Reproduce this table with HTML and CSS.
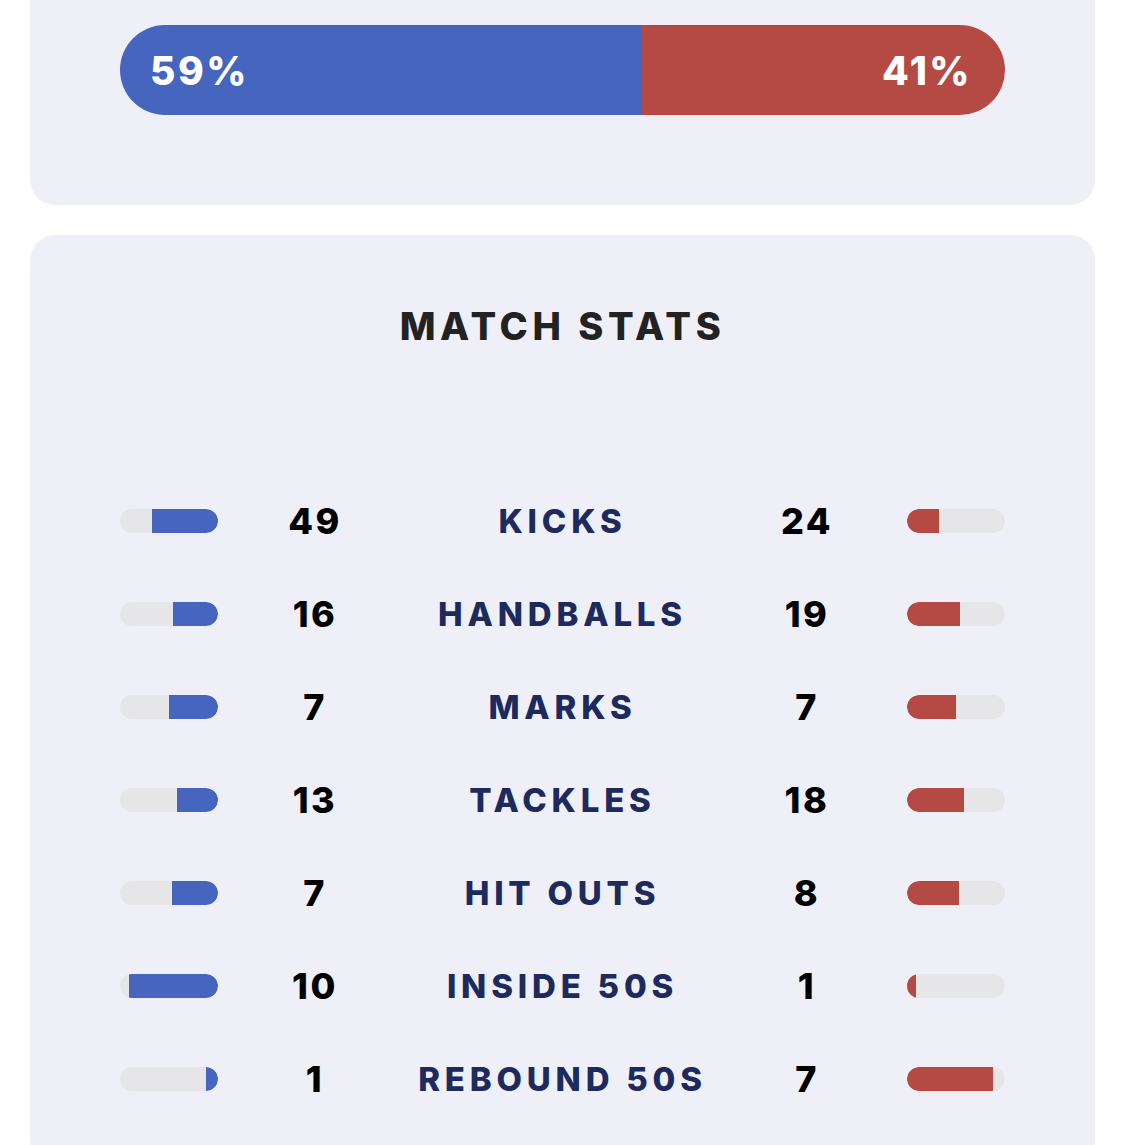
FILE: index.html
```html
<!DOCTYPE html>
<html lang="en">
<head>
<meta charset="utf-8">
<title>Match Stats</title>
<link rel="stylesheet" href="styles.css">
</head>
<body>
<main class="page">
  <section class="card card-possession">
    <div class="split-bar">
      <div class="split home" style="flex-basis:59%"><span>59%</span></div>
      <div class="split away" style="flex-basis:41%"><span>41%</span></div>
    </div>
  </section>

  <section class="card card-stats">
    <h2 class="title">MATCH STATS</h2>
    <div class="stats">
      <div class="row">
        <div class="track home-track"><div class="fill home-fill" style="width:67.1%"></div></div>
        <div class="num">49</div>
        <div class="label"><span>KICKS</span></div>
        <div class="num">24</div>
        <div class="track away-track"><div class="fill away-fill" style="width:32.9%"></div></div>
      </div>
      <div class="row">
        <div class="track home-track"><div class="fill home-fill" style="width:45.7%"></div></div>
        <div class="num">16</div>
        <div class="label"><span>HANDBALLS</span></div>
        <div class="num">19</div>
        <div class="track away-track"><div class="fill away-fill" style="width:54.3%"></div></div>
      </div>
      <div class="row">
        <div class="track home-track"><div class="fill home-fill" style="width:50%"></div></div>
        <div class="num">7</div>
        <div class="label"><span>MARKS</span></div>
        <div class="num">7</div>
        <div class="track away-track"><div class="fill away-fill" style="width:50%"></div></div>
      </div>
      <div class="row">
        <div class="track home-track"><div class="fill home-fill" style="width:41.9%"></div></div>
        <div class="num">13</div>
        <div class="label"><span>TACKLES</span></div>
        <div class="num">18</div>
        <div class="track away-track"><div class="fill away-fill" style="width:58.1%"></div></div>
      </div>
      <div class="row">
        <div class="track home-track"><div class="fill home-fill" style="width:46.7%"></div></div>
        <div class="num">7</div>
        <div class="label"><span>HIT OUTS</span></div>
        <div class="num">8</div>
        <div class="track away-track"><div class="fill away-fill" style="width:53.3%"></div></div>
      </div>
      <div class="row">
        <div class="track home-track"><div class="fill home-fill" style="width:90.9%"></div></div>
        <div class="num">10</div>
        <div class="label"><span>INSIDE 50S</span></div>
        <div class="num">1</div>
        <div class="track away-track"><div class="fill away-fill" style="width:9.1%"></div></div>
      </div>
      <div class="row">
        <div class="track home-track"><div class="fill home-fill" style="width:12.5%"></div></div>
        <div class="num">1</div>
        <div class="label"><span>REBOUND 50S</span></div>
        <div class="num">7</div>
        <div class="track away-track"><div class="fill away-fill" style="width:87.5%"></div></div>
      </div>
    </div>
  </section>
</main>
</body>
</html>
```

FILE: styles.css
```css
* { box-sizing: border-box; }

html, body {
  margin: 0;
  padding: 0;
  background: #ffffff;
  overflow: hidden;
}

body {
  font-family: Inter, "Noto Sans", "Liberation Sans", sans-serif;
  height: 1145px;
}

.page {
  display: flex;
  flex-direction: column;
  gap: 30px;
  padding: 0 30px;
}

.card {
  background: #eff0f7;
  border-radius: 25px;
}

.card-possession {
  margin-top: -40px;
  padding: 65px 90px 90px;
}

.split-bar {
  display: flex;
  height: 90px;
  border-radius: 45px;
  overflow: hidden;
}

.split {
  display: flex;
  align-items: center;
  color: #ffffff;
  font-weight: 800;
  font-size: 39px;
  letter-spacing: 2.5px;
}

.split.home {
  background: #4565be;
  padding-left: 30px;
}

.split.away {
  background: #b54a45;
  justify-content: flex-end;
  padding-right: 33px;
}

.card-stats {
  padding: 66px 90px 0;
  height: 930px;
}

.title {
  margin: 0;
  text-align: center;
  font-size: 38px;
  font-weight: 800;
  letter-spacing: 4.6px;
  color: #222222;
  line-height: 50px;
}

.stats {
  margin-top: 123px;
  display: flex;
  flex-direction: column;
}

.row {
  display: grid;
  grid-template-columns: 98px 192px minmax(0, 1fr) 202px 98px;
  align-items: center;
  height: 93px;
}

.track {
  height: 24px;
  border-radius: 12px;
  background: #e6e6e8;
  display: flex;
  overflow: hidden;
}

.home-track { justify-content: flex-end; }
.away-track { justify-content: flex-start; }

.fill { height: 100%; }

.home-fill {
  background: #4565be;
  border-radius: 0 12px 12px 0;
}

.away-fill {
  background: #b54a45;
  border-radius: 12px 0 0 12px;
}

.num {
  text-align: center;
  font-size: 36px;
  font-weight: 800;
  color: #000000;
  letter-spacing: 2.5px;
  padding-left: 2px;
}

.label {
  display: flex;
  justify-content: center;
  min-width: 0;
  white-space: nowrap;
  font-size: 33px;
  font-weight: 800;
  color: #1c2a5e;
  letter-spacing: 4.8px;
  padding-left: 10px;
}

.label span {
  flex-shrink: 0;
}
```
